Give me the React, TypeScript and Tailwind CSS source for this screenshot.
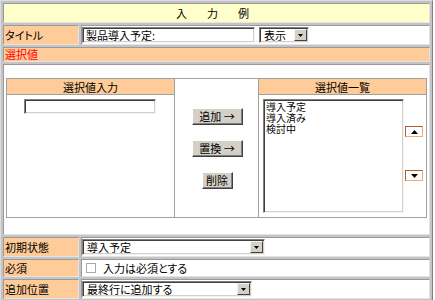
import React from "react";

const cell =
  "border border-t-[#9a9a9a] border-l-[#9a9a9a] border-b-[#e4e4e4] border-r-[#e4e4e4] p-0";
const label = `${cell} bg-[#ffcc99] w-[76px] px-[1px] text-left align-middle`;
const value = `${cell} bg-white px-0 align-middle`;
const inset =
  "border border-t-[#808080] border-l-[#808080] border-b-[#f4f4f4] border-r-[#f4f4f4] shadow-[inset_1px_1px_0_#404040,inset_-1px_-1px_0_#d4d0c8] bg-white";

const Triangle = ({ up }: { up?: boolean }) => (
  <svg width="7" height="4" viewBox="0 0 7 4">
    <path d={up ? "M3.5 0L7 4H0Z" : "M0 0H7L3.5 4Z"} fill="#000" />
  </svg>
);

// old windows style combobox
const Select = ({ width, text }: { width: string; text: string }) => (
  <div className={`${inset} ${width} h-4 flex items-stretch p-[1px]`}>
    <div className="flex-1 pl-[3px] leading-[12px] whitespace-nowrap">{text}</div>
    <div className="w-[13px] bg-[#d4d0c8] border border-t-[#f4f4f4] border-l-[#f4f4f4] border-b-[#404040] border-r-[#404040] flex items-center justify-center">
      <svg width="5" height="3" viewBox="0 0 5 3">
        <path d="M0 0H5L2.5 3Z" fill="#000" />
      </svg>
    </div>
  </div>
);

const Btn = ({ children, width }: { children: React.ReactNode; width: string }) => (
  <button
    className={`${width} h-[17px] bg-[#d4d0c8] border border-t-white border-l-white border-b-[#404040] border-r-[#404040] shadow-[inset_-1px_-1px_0_#808080] text-[11px] leading-[13px] text-black flex items-center justify-center`}
  >
    {children}
  </button>
);

const MoveBtn = ({ up }: { up?: boolean }) => (
  <button className="w-[18px] h-[11px] bg-white border border-t-[#b4602e] border-l-[#b4602e] border-b-[#f2a878] border-r-[#f2a878] flex items-center justify-center">
    <Triangle up={up} />
  </button>
);

const OPTIONS = ["導入予定", "導入済み", "検討中"];

export default function App() {
  return (
    <div className="w-[435px] h-[300px] overflow-hidden bg-white font-['Noto_Sans_CJK_JP',sans-serif] text-[11px] text-black [font-feature-settings:'palt']">
      <table className="w-[433px] border-separate border-spacing-[2px] bg-[#c4c4c4] border border-t-[#dcdcdc] border-l-[#dcdcdc] border-b-[#808080] border-r-[#808080]">
        <tbody>
          <tr>
            <td colSpan={2} className={`${cell} bg-[#ffffcc]`}>
              <div className="h-[18px] flex items-center justify-center gap-[20px] pr-[8px]">
                <span>入</span>
                <span>力</span>
                <span>例</span>
              </div>
            </td>
          </tr>
          <tr>
            <td className={label}>
              <div className="h-[18px] leading-[18px]">タイトル</div>
            </td>
            <td className={value}>
              <div className="h-[18px] flex items-center gap-[4px]">
                <div className={`${inset} w-[173px] h-4 pl-[3px] leading-[14px]`}>製品導入予定:</div>
                <Select width="w-[50px]" text="表示" />
              </div>
            </td>
          </tr>
          <tr>
            <td colSpan={2} className={`${cell} bg-[#ffcc99] text-[#ff0000]`}>
              <div className="h-[13px] leading-[13px] px-[1px]">選択値</div>
            </td>
          </tr>
          <tr>
            <td colSpan={2} className={`${cell} bg-white pl-[2px] pt-[13px] pb-[16px]`}>
              <table className="w-[421px] h-[140px] border-collapse border border-[#a0a0a0]">
                <tbody>
                  <tr>
                    <th className="w-[168px] h-[16px] bg-[#ffcc99] border border-[#a0a0a0] font-normal leading-[14px]">
                      選択値入力
                    </th>
                    <td rowSpan={2} className="w-[84px] border border-[#a0a0a0] align-middle">
                      <div className="flex flex-col items-center gap-[15px] pl-[1px]">
                        <Btn width="w-[51px]">追加 →</Btn>
                        <Btn width="w-[51px]">置換 →</Btn>
                        <Btn width="w-[31px]">削除</Btn>
                      </div>
                    </td>
                    <th className="h-[16px] bg-[#ffcc99] border border-[#a0a0a0] font-normal leading-[14px]">
                      選択値一覧
                    </th>
                  </tr>
                  <tr>
                    <td className="border border-[#a0a0a0] align-top">
                      <div className="flex justify-center pt-[4px] pr-[2px]">
                        <div className={`${inset} w-[132px] h-[15px]`} />
                      </div>
                    </td>
                    <td className="border border-[#a0a0a0] align-top">
                      <div className="flex pl-[4px] pt-[4px] pb-[3px]">
                        <div className={`${inset} w-[141px] h-[114px] pl-[2px] pt-[1px] text-[10px]`}>
                          {OPTIONS.map((o) => (
                            <div key={o} className="h-[11px] leading-[11px]">
                              {o}
                            </div>
                          ))}
                        </div>
                        <div className="flex flex-col pl-[1px] pt-[27px] gap-[33px]">
                          <MoveBtn up />
                          <MoveBtn />
                        </div>
                      </div>
                    </td>
                  </tr>
                </tbody>
              </table>
            </td>
          </tr>
          <tr>
            <td className={label}>
              <div className="h-[18px] leading-[18px]">初期状態</div>
            </td>
            <td className={value}>
              <div className="h-[18px] flex items-center">
                <Select width="w-[183px]" text="導入予定" />
              </div>
            </td>
          </tr>
          <tr>
            <td className={label}>
              <div className="h-[16px] leading-[16px]">必須</div>
            </td>
            <td className={value}>
              <div className="h-[16px] flex items-center pl-[4px] gap-[7px]">
                <span className="w-[10px] h-[10px] border border-[#a8a8a8] bg-white" />
                <span>入力は必須とする</span>
              </div>
            </td>
          </tr>
          <tr>
            <td className={label}>
              <div className="h-[18px] leading-[18px]">追加位置</div>
            </td>
            <td className={value}>
              <div className="h-[18px] flex items-center">
                <Select width="w-[170px]" text="最終行に追加する" />
              </div>
            </td>
          </tr>
        </tbody>
      </table>
    </div>
  );
}
